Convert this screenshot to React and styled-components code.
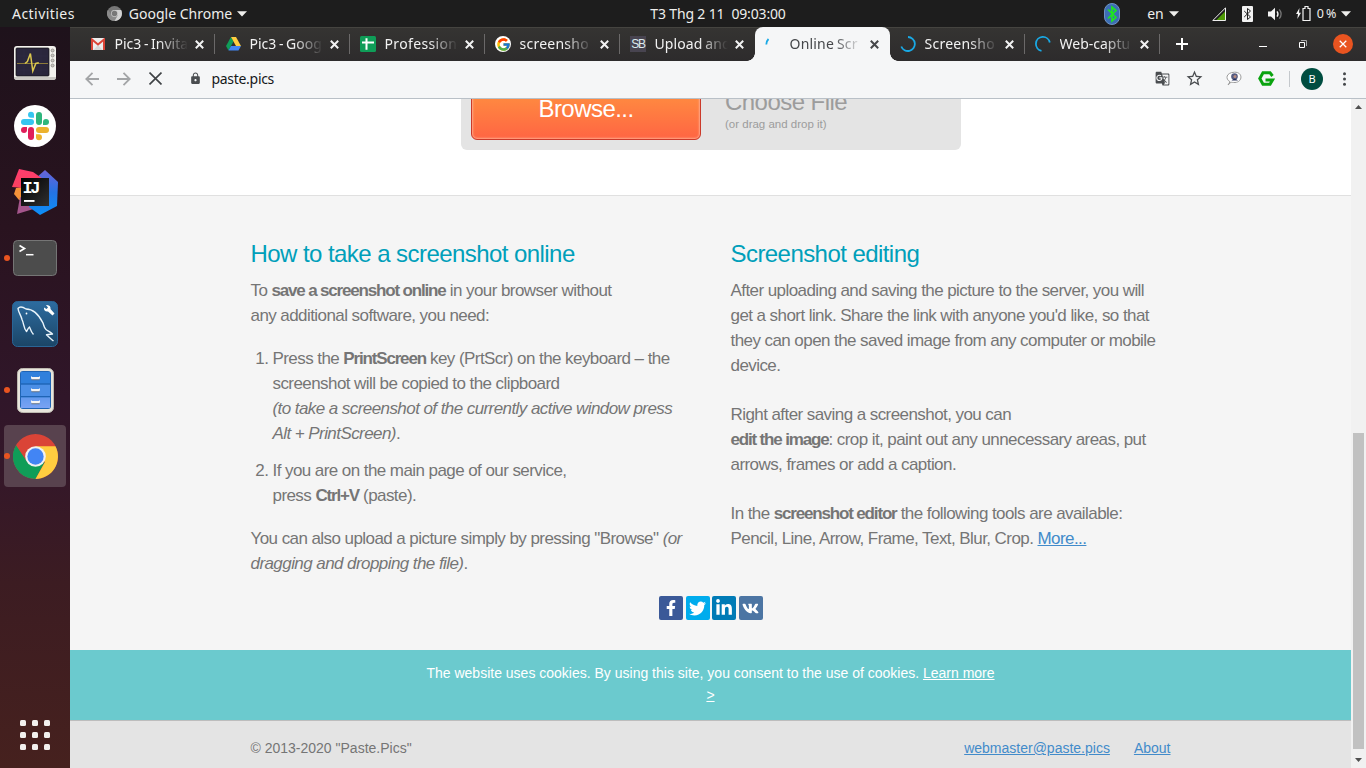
import React from "react";
import styled, { createGlobalStyle, css } from "styled-components";
import { FaFacebookF, FaTwitter, FaLinkedinIn, FaVk } from "react-icons/fa";
import { FcGoogle } from "react-icons/fc";
import { MdGTranslate, MdLock, MdStarBorder } from "react-icons/md";

const Global = createGlobalStyle`
  * { box-sizing: border-box; }
  body { margin: 0; background: #f5f5f5; overflow: hidden; }
  svg { display: block; flex: none; }
`;

const ui = css`
  font-family: "Noto Sans", "Open Sans", sans-serif;
  font-size: 14px;
`;

const Desktop = styled.div`
  width: 1366px;
  height: 768px;
  display: flex;
  flex-direction: column;
  overflow: hidden;
`;

/* ---------- system bar ---------- */

const SystemBar = styled.header`
  ${ui}
  height: 27px;
  flex: none;
  display: grid;
  grid-template-columns: 1fr auto 1fr;
  align-items: center;
  background: #1d1d1d;
  color: #eeeeec;
  white-space: nowrap;
`;

const BarGroup = styled.div`
  display: flex;
  align-items: center;
  height: 27px;
  justify-content: ${(p) => (p.$end ? "flex-end" : "flex-start")};
  padding: ${(p) => (p.$end ? "0 15px 0 0" : "0 0 0 12px")};
`;

const BarText = styled.span`
  font-size: ${(p) => p.$size || 14}px;
  line-height: 26px;
  letter-spacing: ${(p) => p.$track || 0}px;
  margin-left: ${(p) => p.$gap || 0}px;
`;

const BarIcon = styled.span`
  margin-left: ${(p) => p.$gap}px;
`;

const Caret = () => (
  <svg width="10" height="6" viewBox="0 0 10 6">
    <path d="M0 .3h10L5 5.6z" fill="#eeeeec" />
  </svg>
);

/* ---------- dock ---------- */

const Body = styled.div`
  flex: 1;
  min-height: 0;
  display: flex;
`;

const Dock = styled.nav`
  width: 70px;
  flex: none;
  padding: 2px 4px 18px;
  display: flex;
  flex-direction: column;
  gap: 4px;
  background: linear-gradient(#1e121b 0, #29131f 27%, #301629 50%, #341729 60%, #3c1c22 75%, #46211e 100%);
`;

const DockItem = styled.div`
  position: relative;
  height: 62px;
  display: flex;
  align-items: center;
  justify-content: center;
  border-radius: 4px;
  background: ${(p) => (p.$active ? "#58424e" : "transparent")};
  padding-top: ${(p) => p.$drop || 0}px;
`;

const RunDot = styled.i`
  position: absolute;
  left: 0;
  top: 28px;
  width: 6px;
  height: 6px;
  border-radius: 50%;
  background: #e95420;
`;

const AppsButton = styled.div`
  margin: auto auto 0;
  display: grid;
  grid-template-columns: repeat(3, 6px);
  gap: 6px;
`;

const AppsDot = styled.i`
  height: 6px;
  border-radius: 1.5px;
  background: #f2f0ee;
`;

const MonitorIcon = () => (
  <svg width="42" height="34" viewBox="0 0 42 34">
    <rect width="42" height="34" rx="3" fill="#f3f2ee" />
    <path d="M0 31h42q0 3-3 3H3q-3 0-3-3z" fill="#cbc9c4" />
    <rect x="2" y="2" width="33" height="28" rx="1" fill="#2a263c" stroke="#111" strokeWidth=".7" />
    <path d="M3 17.500H34M3 10h31M3 24h31M10 3v26M27 3v26" stroke="#302c44" strokeWidth=".6" />
    <path d="M3 17.500h31" stroke="#8d7b3a" strokeWidth="1" />
    <path d="M11 17.500l2.400-2 3-8 2.400 17.500 3-7.500 3-.8" fill="none" stroke="#dcc84e" strokeWidth="1.500" />
    <g fill="#c9c7c2" stroke="#8b8984" strokeWidth=".8">
      <circle cx="38.600" cy="4.500" r="1.500" /><circle cx="38.600" cy="9.500" r="1.500" />
      <circle cx="38.600" cy="14.500" r="1.500" /><circle cx="38.600" cy="19.500" r="1.500" />
    </g>
  </svg>
);

const SlackIcon = () => (
  <svg width="42" height="42" viewBox="0 0 42 42">
    <circle cx="21" cy="21" r="21" fill="#fff" />
    <g fill="#36c5f0">
      <rect x="7" y="14" width="13" height="6" rx="3" /><path d="M20 12.700h-3a3 3 0 1 1 3-3z" />
    </g>
    <g fill="#2eb67d">
      <rect x="22" y="7" width="6" height="13" rx="3" /><path d="M29 20v-3a3 3 0 1 1 3 3z" />
    </g>
    <g fill="#ecb22e">
      <rect x="22" y="22" width="13" height="6" rx="3" /><path d="M22 29.300h3a3 3 0 1 1-3 3z" />
    </g>
    <g fill="#e01e5a">
      <rect x="14" y="22" width="6" height="13" rx="3" /><path d="M13 22v3a3 3 0 1 1-3-3z" />
    </g>
  </svg>
);

const IdeaText = styled.text`
  font: bold 17px "Liberation Mono", monospace;
  fill: #fff;
`;

const IdeaIcon = () => (
  <svg width="46" height="46" viewBox="0 0 46 46">
    <defs>
      <linearGradient id="ideaBlue" x1="0" y1="0" x2="0" y2="1">
        <stop offset="0" stopColor="#6b63d8" /><stop offset=".5" stopColor="#2474e5" /><stop offset="1" stopColor="#0c8ff8" />
      </linearGradient>
      <linearGradient id="ideaPink" x1="0" y1="0" x2="0" y2="1">
        <stop offset="0" stopColor="#ff3d6e" /><stop offset="1" stopColor="#f9415f" />
      </linearGradient>
      <linearGradient id="ideaBlack" x1="0" y1="0" x2="1" y2="1">
        <stop offset="0" stopColor="#000" /><stop offset="1" stopColor="#303030" />
      </linearGradient>
    </defs>
    <path d="M4 19l7-1v14l-4-1-5-6z" fill="#f59239" />
    <path d="M8 28l20 10-23 7z" fill="#a5568c" />
    <path d="M24 9l9-8 13 12-1 24-17 9-11-8z" fill="url(#ideaBlue)" />
    <path d="M7 0l14 3 10 7-20 9-11-1z" fill="url(#ideaPink)" />
    <rect x="9" y="9" width="28" height="28" fill="url(#ideaBlack)" />
    <IdeaText x="10.500" y="24" textLength="18">IJ</IdeaText>
    <rect x="12" y="31" width="10.500" height="1.900" fill="#fff" />
  </svg>
);

const TerminalIcon = () => (
  <svg width="44" height="36" viewBox="0 0 44 36">
    <rect x=".5" y=".5" width="43" height="35" rx="4" fill="#4c4c4c" stroke="#757575" />
    <path d="M6.500 5.500l5 3-5 3" fill="none" stroke="#fff" strokeWidth="1.700" />
    <path d="M13 14.700h7.500" stroke="#fff" strokeWidth="1.500" />
  </svg>
);

const DolphinIcon = () => (
  <svg width="46" height="46" viewBox="0 0 46 46">
    <defs>
      <linearGradient id="sea" x1="0" y1="0" x2="0" y2="1">
        <stop offset="0" stopColor="#2d6ca0" /><stop offset="1" stopColor="#1b4566" />
      </linearGradient>
    </defs>
    <rect x=".5" y=".5" width="45" height="45" rx="5" fill="url(#sea)" stroke="#2a6596" />
    <path d="M21.500 33.500c-2-2-3-5-4-7.500-1.500 1-2 3-3 4.500-3-3-2.500-8-4.500-12C9 14 6.500 12 6 7.500c2-2.500 5-1.500 8 .5 8 0 13 6 17 14 1 2.500 1 5 3 6.500 2 1.500 4.500 2.500 6.500 4.500l-6 .8c2 2.200 4.500 4 7 6.200" fill="none" stroke="#e9f4fb" strokeWidth="1.400" strokeLinejoin="round" />
    <circle cx="14.500" cy="12.500" r=".9" fill="#fff" />
    <path d="M34 4l2 2.500-1.500 1.500L32 6.500c-.4 3 1.500 4.500 4 4l4.500 4 2-2-4-4.500c.5-2-1-4.500-4.500-4z" fill="#fff" />
  </svg>
);

const FilesIcon = () => (
  <svg width="37" height="45" viewBox="0 0 37 45">
    <defs>
      <linearGradient id="drawers" x1="0" y1="0" x2="0" y2="1">
        <stop offset="0" stopColor="#2f83dc" /><stop offset="1" stopColor="#78a4f5" />
      </linearGradient>
    </defs>
    <rect x=".5" y=".5" width="36" height="44" rx="5" fill="#e8e5dc" stroke="#bdb9b0" />
    <rect x="3" y="3" width="31" height="38" rx="3" fill="#1f64b5" />
    <path d="M4 4h29v11.300H4z" fill="#3080dc" />
    <path d="M4 16.700h29v11.300H4z" fill="#4c8fe6" />
    <path d="M4 29.400h29V40H4z" fill="url(#drawers)" />
    <path d="M4 29.400h29V40H4z" fill="#7aa3f4" opacity=".7" />
    <path d="M14.500 11.700h8M14.500 23.700h8M14.500 35.700h8" stroke="#5a6c86" strokeWidth="1.200" />
    <path d="M14.500 10.200h8M14.500 22.200h8M14.500 34.200h8" stroke="#f4f4f4" strokeWidth="2.200" />
    <path d="M14.500 8.500v2M22.500 8.500v2M14.500 20.500v2M22.500 20.500v2M14.500 32.500v2M22.500 32.500v2" stroke="#f4f4f4" strokeWidth="1" />
  </svg>
);

const ChromeIcon = ({ size = 45, mono = false }) => (
  <svg width={size} height={size} viewBox="0 0 48 48">
    <circle cx="24" cy="24" r="24" fill={mono ? "#777" : "#da4437"} />
    <path d="M3.200 12A24 24 0 0 0 24 48l10-18.500L24 34l-9-4.500z" fill={mono ? "#8b8b8b" : "#0f9d58"} />
    <path d="M24 13h21.300A24 24 0 0 1 24 48l10-18z" fill={mono ? "#d2d2d2" : "#ffcd40"} />
    <circle cx="24" cy="24" r="11" fill={mono ? "#c8c8c8" : "#f1f1f1"} />
    <circle cx="24" cy="24" r="8.700" fill={mono ? "#777" : "#4285f4"} />
  </svg>
);

const DOCK = [
  { Icon: MonitorIcon, drop: 6 },
  { Icon: SlackIcon },
  { Icon: IdeaIcon },
  { Icon: TerminalIcon, running: true },
  { Icon: DolphinIcon },
  { Icon: FilesIcon, running: true },
  { Icon: ChromeIcon, running: true, active: true },
];

/* ---------- browser ---------- */

const Browser = styled.main`
  flex: 1;
  min-width: 0;
  display: flex;
  flex-direction: column;
`;

const TabStrip = styled.div`
  ${ui}
  height: 34px;
  flex: none;
  display: flex;
  padding-left: 10px;
  color: #f2f2f2;
  background: linear-gradient(#353432, #2d2b2c);
  box-shadow: inset 0 1px #454440;
`;

const TabBox = styled.div`
  position: relative;
  width: 135px;
  height: 34px;
  flex: none;
  display: flex;
  align-items: center;
  padding-left: 9.5px;
  color: ${(p) => (p.$active ? "#45474a" : "#f2f2f2")};
  background: ${(p) => (p.$active ? "#f5f6f7" : "transparent")};
  border-radius: 8px 8px 0 0;

  &::after {
    content: "";
    position: absolute;
    right: 0;
    top: 7px;
    width: 1px;
    height: 20px;
    background: ${(p) => (p.$divider ? "#6b6969" : "transparent")};
  }
`;

const TabFoot = styled.i`
  position: absolute;
  bottom: 0;
  ${(p) => (p.$right ? "left: 100%" : "right: 100%")};
  width: 8px;
  height: 8px;
  background: radial-gradient(circle at ${(p) => (p.$right ? "100% 0" : "0 0")}, transparent 7.5px, #f5f6f7 8px);
`;

const Favicon = styled.span`
  width: 17px;
  display: flex;
  justify-content: center;
`;

const TabTitle = styled.span`
  width: 76px;
  margin-left: 8px;
  white-space: nowrap;
  line-height: 34px;
  letter-spacing: ${(p) => p.$track || 0}px;
  word-spacing: -1px;
  mask-image: linear-gradient(90deg, #000 58%, transparent 96%);
`;

const CloseMark = styled.span`
  margin-left: 4px;
`;

const Cross = ({ size = 9, width = 2 }) => (
  <svg width={size} height={size} viewBox="0 0 9 9">
    <path d="M.8.8l7.400 7.400M8.200.8L.8 8.200" stroke="currentColor" strokeWidth={width} />
  </svg>
);

const GmailIcon = () => (
  <svg width="14" height="12" viewBox="0 0 14 12">
    <rect width="14" height="12" rx="1" fill="#ededed" />
    <path d="M2.500 12L7 7l4.500 5z" fill="#d6d6d6" />
    <path d="M1 12V1.500l6 5 6-5V12" fill="none" stroke="#db4437" strokeWidth="2" />
  </svg>
);

const DriveIcon = () => (
  <svg width="15" height="14" viewBox="0 0 15 14">
    <path d="M5 0L0 9l2.500 4.500 5-9z" fill="#0f9d58" />
    <path d="M5 0h5l5 9h-5z" fill="#ffcd40" />
    <path d="M5 9h10l-2.500 4.500h-10z" fill="#4285f4" />
  </svg>
);

const SheetsIcon = () => (
  <svg width="16" height="16" viewBox="0 0 16 16">
    <rect width="16" height="16" rx="1.500" fill="#0f9d58" />
    <path d="M2 6.500h12M6.500 2.200v11.600" stroke="#fff" strokeWidth="2" />
  </svg>
);

const GoogleBadge = styled.span`
  width: 16px;
  height: 16px;
  border-radius: 50%;
  background: #fff;
  display: grid;
  place-items: center;
`;

const SbBadge = styled.span`
  width: 16px;
  height: 16px;
  background: #484450;
  color: #dcebee;
  font: 12px/16px "Liberation Sans Narrow", "Liberation Sans", sans-serif;
  letter-spacing: -1.2px;
  text-align: center;
`;

const Spinner = ({ d }) => (
  <svg width="16" height="16" viewBox="0 0 16 16">
    <path d={d} fill="none" stroke="#19a9e5" strokeWidth="1.800" />
  </svg>
);

const TABS = [
  { title: "Pic3 - Invita", icon: <GmailIcon />, divider: true },
  { title: "Pic3 - Goog", icon: <DriveIcon />, divider: true },
  { title: "Profession", icon: <SheetsIcon />, divider: true, track: 0.35 },
  { title: "screensho", icon: <GoogleBadge><FcGoogle size={15} /></GoogleBadge>, divider: true, track: 0.25 },
  { title: "Upload and", icon: <SbBadge>SB</SbBadge>, track: 0.1 },
  { title: "Online Scr", icon: <Spinner d="M1.300 8.500Q1.500 5 3.500 3" />, active: true, track: 0.2 },
  { title: "Screensho", icon: <Spinner d="M8 1A7 7 0 1 1 1.300 10.500" />, divider: true, track: 0.25 },
  { title: "Web-captu", icon: <Spinner d="M6.500 14.800A7 7 0 1 1 14.800 6.500" />, divider: true },
];

const NewTab = styled.span`
  display: flex;
  align-items: center;
  padding-left: 16px;
`;

const WindowButtons = styled.div`
  margin-left: auto;
  padding-right: 13px;
  display: flex;
  align-items: center;
  gap: 27px;
`;

const MinimizeMark = styled.span`
  margin-right: 5px;
`;

const CloseWindow = styled.span`
  width: 20px;
  height: 20px;
  margin-left: -1px;
  border-radius: 50%;
  background: #e95420;
  color: #fff;
  display: grid;
  place-items: center;
`;

const Toolbar = styled.div`
  ${ui}
  height: 38px;
  flex: none;
  display: flex;
  align-items: center;
  padding: 0 20px 2px 15px;
  background: #f5f6f7;
  border-bottom: 1px solid #b9c0c7;
`;

const NavIcons = styled.div`
  display: flex;
  gap: 18px;
  align-items: center;
`;

const Address = styled.div`
  display: flex;
  align-items: center;
  gap: 9.5px;
  margin-left: 27px;
  color: #16181a;
  font-size: 14px;
  letter-spacing: -0.3px;
`;

const Tools = styled.div`
  margin-left: auto;
  display: flex;
  align-items: center;
  color: #4a4d50;
`;

const Slot = styled.span`
  margin-left: ${(p) => p.$gap}px;
`;

const ToolDivider = styled.i`
  width: 1px;
  height: 16px;
  margin-left: 14px;
  background: #c4c8cc;
`;

const Avatar = styled.span`
  width: 22px;
  height: 22px;
  margin-left: 11px;
  border-radius: 50%;
  background: #004d40;
  color: #fff;
  font-size: 11px;
  line-height: 22px;
  text-align: center;
`;

/* ---------- page ---------- */

const Viewport = styled.div`
  flex: 1;
  min-height: 0;
  display: flex;
`;

const Page = styled.div`
  flex: 1;
  min-width: 0;
  display: flex;
  flex-direction: column;
  background: #f5f5f5;
  font-family: "Liberation Sans", Arial, sans-serif;
  color: #757575;
`;

const UploadSection = styled.section`
  height: 97px;
  flex: none;
  display: flex;
  align-items: flex-end;
  justify-content: center;
  padding: 0 0 45px 1px;
  overflow: hidden;
  background: #fff;
  border-bottom: 1px solid #e0e0e0;
`;

const DropBox = styled.div`
  width: 500px;
  height: 90px;
  flex: none;
  display: flex;
  align-items: flex-end;
  padding: 10px;
  background: #e4e4e4;
  border-radius: 6px;
`;

const BrowseButton = styled.button`
  width: 230px;
  height: 64px;
  padding: 2px 0 0;
  border: 1px solid #cb3a2a;
  border-radius: 6px;
  background: linear-gradient(#ff9a3f, #ff6543);
  box-shadow: inset 0 0 2px 1px #ffa98a;
  color: #fff;
  font: 24px/28px "Liberation Sans", Arial, sans-serif;
  letter-spacing: -0.55px;
`;

const ChooseFile = styled.div`
  margin-left: 24px;
  padding-bottom: 8px;
  color: #9c9c9c;
  font-size: 24px;
  line-height: 28px;
  letter-spacing: -0.55px;
`;

const Hint = styled.small`
  display: block;
  font-size: 11.5px;
  line-height: 16px;
  letter-spacing: 0;
`;

const Article = styled.section`
  width: 920px;
  height: 400px;
  flex: none;
  margin: 0 auto;
  padding-top: 43px;
  display: grid;
  grid-template-columns: 440px 440px;
  gap: 40px;
  font-size: 17px;
  line-height: 25px;
  letter-spacing: -0.57px;
  white-space: nowrap;
`;

const Heading = styled.h2`
  margin: 0 0 9px;
  font-size: 24px;
  font-weight: 400;
  line-height: 30px;
  letter-spacing: -0.56px;
  color: #009fba;
`;

const Paragraph = styled.p`
  margin: 0 0 ${(p) => p.$gap ?? 24}px;
`;

const Strong = styled.strong`
  letter-spacing: -1.17px;
`;

const Steps = styled.ol`
  margin: 0 0 18px;
  padding-left: 22px;
`;

const Step = styled.li`
  & + & { margin-top: 12px; }
`;

const Link = styled.a`
  color: ${(p) => p.$color || "#428bca"};
  text-decoration: underline;
`;

const ShareRow = styled.div`
  height: 54px;
  flex: none;
  display: flex;
  justify-content: center;
  padding-left: 1px;
  gap: 2.6px;
`;

const ShareButton = styled.span`
  width: 24px;
  height: 24px;
  border-radius: 2px;
  display: grid;
  place-items: center;
  background: ${(p) => p.$bg};
  color: #fff;
`;

const CookieBar = styled.div`
  height: 70px;
  flex: none;
  padding-top: 13px;
  background: #6bcace;
  color: #fff;
  font-size: 14px;
  line-height: 21.5px;
  text-align: center;
`;

const Footer = styled.footer`
  flex: 1;
  display: flex;
  padding: 0 180.5px;
  border-top: 1px solid #bdbdbd;
  background: #e4e4e4;
  font-size: 14px;
  line-height: 54px;
`;

const FooterLinks = styled.div`
  margin-left: auto;
  display: flex;
  gap: 24px;
`;

const ScrollBar = styled.div`
  width: 15px;
  flex: none;
  display: flex;
  flex-direction: column;
  align-items: center;
  justify-content: space-between;
  padding: 6px 0 6px;
  background: #f1f1f1;
`;

const ScrollThumb = styled.div`
  width: 11px;
  height: 316px;
  margin: auto 0 9px;
  background: #c1c1c1;
`;

const ScrollArrow = ({ down }) => (
  <svg width="7" height="4" viewBox="0 0 7 4">
    <path d={down ? "M0 0h7L3.500 4z" : "M0 4h7L3.500 0z"} fill="#505050" />
  </svg>
);

function Tab({ tab }) {
  return (
    <TabBox $active={tab.active} $divider={tab.divider}>
      {tab.active && <TabFoot />}
      {tab.active && <TabFoot $right />}
      <Favicon>{tab.icon}</Favicon>
      <TabTitle $track={tab.track}>{tab.title}</TabTitle>
      <CloseMark><Cross /></CloseMark>
    </TabBox>
  );
}

export default function App() {
  return (
    <Desktop>
      <Global />
      <SystemBar>
        <BarGroup>
          <BarText $track={0.45}>Activities</BarText>
          <BarIcon $gap={32}><ChromeIcon size={15} mono /></BarIcon>
          <BarText $gap={7}>Google Chrome</BarText>
          <BarIcon $gap={5}><Caret /></BarIcon>
        </BarGroup>
        <BarText $gap={70} $track={-0.15}>T3 Thg 2 11&nbsp; 09:03:00</BarText>
        <BarGroup $end>
          <svg width="16" height="22" viewBox="0 0 16 22">
            <rect x=".5" y=".5" width="15" height="21" rx="7.500" fill="#3c6eb4" stroke="#6f93c2" />
            <path d="M4 6.500l8 8L8 18V4l4 3.500-8 8" fill="none" stroke="#1fe51f" strokeWidth="1.700" />
          </svg>
          <BarText $gap={27}>en</BarText>
          <BarIcon $gap={5}><Caret /></BarIcon>
          <BarIcon $gap={33}>
            <svg width="14" height="14" viewBox="0 0 14 14">
              <path d="M13.500.8v12.700H.8z" fill="#1d1d1d" stroke="#eee" />
              <path d="M13 4.500V13H4.500z" fill="#4e9a06" />
            </svg>
          </BarIcon>
          <BarIcon $gap={16}>
            <svg width="11" height="16" viewBox="0 0 11 16">
              <rect width="11" height="16" rx="1" fill="#f3f3f3" />
              <path d="M2.200 5l6.300 6-3 2.500v-11l3 2.500-6.300 6" fill="none" stroke="#222" strokeWidth="1" />
            </svg>
          </BarIcon>
          <BarIcon $gap={15}>
            <svg width="15" height="14" viewBox="0 0 15 14">
              <path d="M0 4.500h3L7 .8v12.400L3 9.500H0z" fill="#f3f3f3" />
              <path d="M9 4.300q2 2.700 0 5.400" fill="none" stroke="#f3f3f3" strokeWidth="1.300" />
              <path d="M11.300 2.300q3.600 4.700 0 9.400" fill="none" stroke="#777" strokeWidth="1.300" />
            </svg>
          </BarIcon>
          <BarIcon $gap={13}>
            <svg width="15" height="15" viewBox="0 0 15 15">
              <path d="M3.500 2L0 8h2l-.7 5L5 6.800H3z" fill="#f3f3f3" />
              <path d="M7 2.500h2v-2h3v2h2v12H7z" fill="none" stroke="#f3f3f3" strokeWidth="1.200" />
            </svg>
          </BarIcon>
          <BarText $gap={6} $size={12.5} $track={-0.5}>0 %</BarText>
          <BarIcon $gap={5}><Caret /></BarIcon>
        </BarGroup>
      </SystemBar>

      <Body>
        <Dock>
          {DOCK.map(({ Icon, running, active, drop }, i) => (
            <DockItem key={i} $active={active} $drop={drop}>
              {running && <RunDot />}
              <Icon />
            </DockItem>
          ))}
          <AppsButton>
            {Array.from({ length: 9 }, (_, i) => <AppsDot key={i} />)}
          </AppsButton>
        </Dock>

        <Browser>
          <TabStrip>
            {TABS.map((tab) => <Tab key={tab.title} tab={tab} />)}
            <NewTab>
              <svg width="12" height="12" viewBox="0 0 12 12">
                <path d="M6 0v12M0 6h12" stroke="#fff" strokeWidth="2" />
              </svg>
            </NewTab>
            <WindowButtons>
              <MinimizeMark>
                <svg width="8" height="8" viewBox="0 0 8 8"><path d="M0 6.500h8" stroke="#fff" /></svg>
              </MinimizeMark>
              <svg width="8" height="8" viewBox="0 0 8 8">
                <path d="M.5 2.500h5v5h-5z" fill="none" stroke="#fff" />
                <path d="M2 .5h5.500V6" fill="none" stroke="#aaa" />
              </svg>
              <CloseWindow><Cross size={8} width={1.400} /></CloseWindow>
            </WindowButtons>
          </TabStrip>

          <Toolbar>
            <NavIcons>
              <svg width="14" height="14" viewBox="0 0 14 14">
                <path d="M14 7H1.500M7.500.8L1.300 7l6.200 6.200" fill="none" stroke="#a3a5a7" strokeWidth="1.800" />
              </svg>
              <svg width="14" height="14" viewBox="0 0 14 14">
                <path d="M0 7h12.500M6.500.8L12.700 7l-6.200 6.200" fill="none" stroke="#a3a5a7" strokeWidth="1.800" />
              </svg>
              <svg width="13" height="13" viewBox="0 0 12 12">
                <path d="M.5.5l11 11M11.500.5l-11 11" stroke="#3f4245" strokeWidth="1.500" />
              </svg>
            </NavIcons>
            <Address>
              <MdLock size={13} color="#4a4d50" />
              paste.pics
            </Address>
            <Tools>
              <MdGTranslate size={15} />
              <Slot $gap={15}><MdStarBorder size={19} /></Slot>
              <Slot $gap={22}>
                <svg width="17" height="16" viewBox="0 0 17 16">
                  <path d="M2 14l2-3.300C-1 8 0 1.500 8.500 1.200S17 11 9 11.500c-2 0-3-.1-4-.3z" fill="#fff" stroke="#9b9b9b" />
                  <circle cx="8.500" cy="5.500" r="3.300" fill="#555b80" />
                  <path d="M5.500 9.500Q8.500 6 12 9.500z" fill="#26305c" />
                  <circle cx="9" cy="5.500" r="1.500" fill="#b98c80" />
                </svg>
              </Slot>
              <Slot $gap={15}>
                <svg width="17" height="15" viewBox="0 0 17 15">
                  <path d="M14.500 5L12 1.700H5L1.800 7.500 5 13.300h7l2.500-4.300H7.500" fill="none" stroke="#0aa30f" strokeWidth="3" />
                </svg>
              </Slot>
              <ToolDivider />
              <Avatar>B</Avatar>
              <Slot $gap={20}>
                <svg width="3" height="14" viewBox="0 0 3 14" fill="#45484b">
                  <circle cx="1.500" cy="1.700" r="1.500" /><circle cx="1.500" cy="7" r="1.500" /><circle cx="1.500" cy="12.300" r="1.500" />
                </svg>
              </Slot>
            </Tools>
          </Toolbar>

          <Viewport>
            <Page>
              <UploadSection>
                <DropBox>
                  <BrowseButton>Browse...</BrowseButton>
                  <ChooseFile>Choose File<Hint>(or drag and drop it)</Hint></ChooseFile>
                </DropBox>
              </UploadSection>

              <Article>
                <div>
                  <Heading>How to take a screenshot online</Heading>
                  <Paragraph $gap={18}>
                    To <Strong>save a screenshot online</Strong> in your browser without<br />
                    any additional software, you need:
                  </Paragraph>
                  <Steps>
                    <Step>
                      Press the <Strong>PrintScreen</Strong> key (PrtScr) on the keyboard – the<br />
                      screenshot will be copied to the clipboard<br />
                      <em>(to take a screenshot of the currently active window press<br />
                      Alt + PrintScreen)</em>.
                    </Step>
                    <Step>
                      If you are on the main page of our service,<br />
                      press <Strong>Ctrl+V</Strong> (paste).
                    </Step>
                  </Steps>
                  <Paragraph>
                    You can also upload a picture simply by pressing "Browse" <em>(or<br />
                    dragging and dropping the file)</em>.
                  </Paragraph>
                </div>
                <div>
                  <Heading>Screenshot editing</Heading>
                  <Paragraph>
                    After uploading and saving the picture to the server, you will<br />
                    get a short link. Share the link with anyone you'd like, so that<br />
                    they can open the saved image from any computer or mobile<br />
                    device.
                  </Paragraph>
                  <Paragraph>
                    Right after saving a screenshot, you can<br />
                    <Strong>edit the image</Strong>: crop it, paint out any unnecessary areas, put<br />
                    arrows, frames or add a caption.
                  </Paragraph>
                  <Paragraph>
                    In the <Strong>screenshot editor</Strong> the following tools are available:<br />
                    Pencil, Line, Arrow, Frame, Text, Blur, Crop. <Link>More...</Link>
                  </Paragraph>
                </div>
              </Article>

              <ShareRow>
                <ShareButton $bg="#3b5998"><FaFacebookF size={16} /></ShareButton>
                <ShareButton $bg="#00aced"><FaTwitter size={17} /></ShareButton>
                <ShareButton $bg="#007bb6"><FaLinkedinIn size={18} /></ShareButton>
                <ShareButton $bg="#4c75a3"><FaVk size={17} /></ShareButton>
              </ShareRow>

              <CookieBar>
                The website uses cookies. By using this site, you consent to the use of cookies.{" "}
                <Link $color="#fff">Learn more<br />&gt;</Link>
              </CookieBar>

              <Footer>
                <span>© 2013-2020 "Paste.Pics"</span>
                <FooterLinks>
                  <Link>webmaster@paste.pics</Link>
                  <Link>About</Link>
                </FooterLinks>
              </Footer>
            </Page>

            <ScrollBar>
              <ScrollArrow />
              <ScrollThumb />
              <ScrollArrow down />
            </ScrollBar>
          </Viewport>
        </Browser>
      </Body>
    </Desktop>
  );
}
